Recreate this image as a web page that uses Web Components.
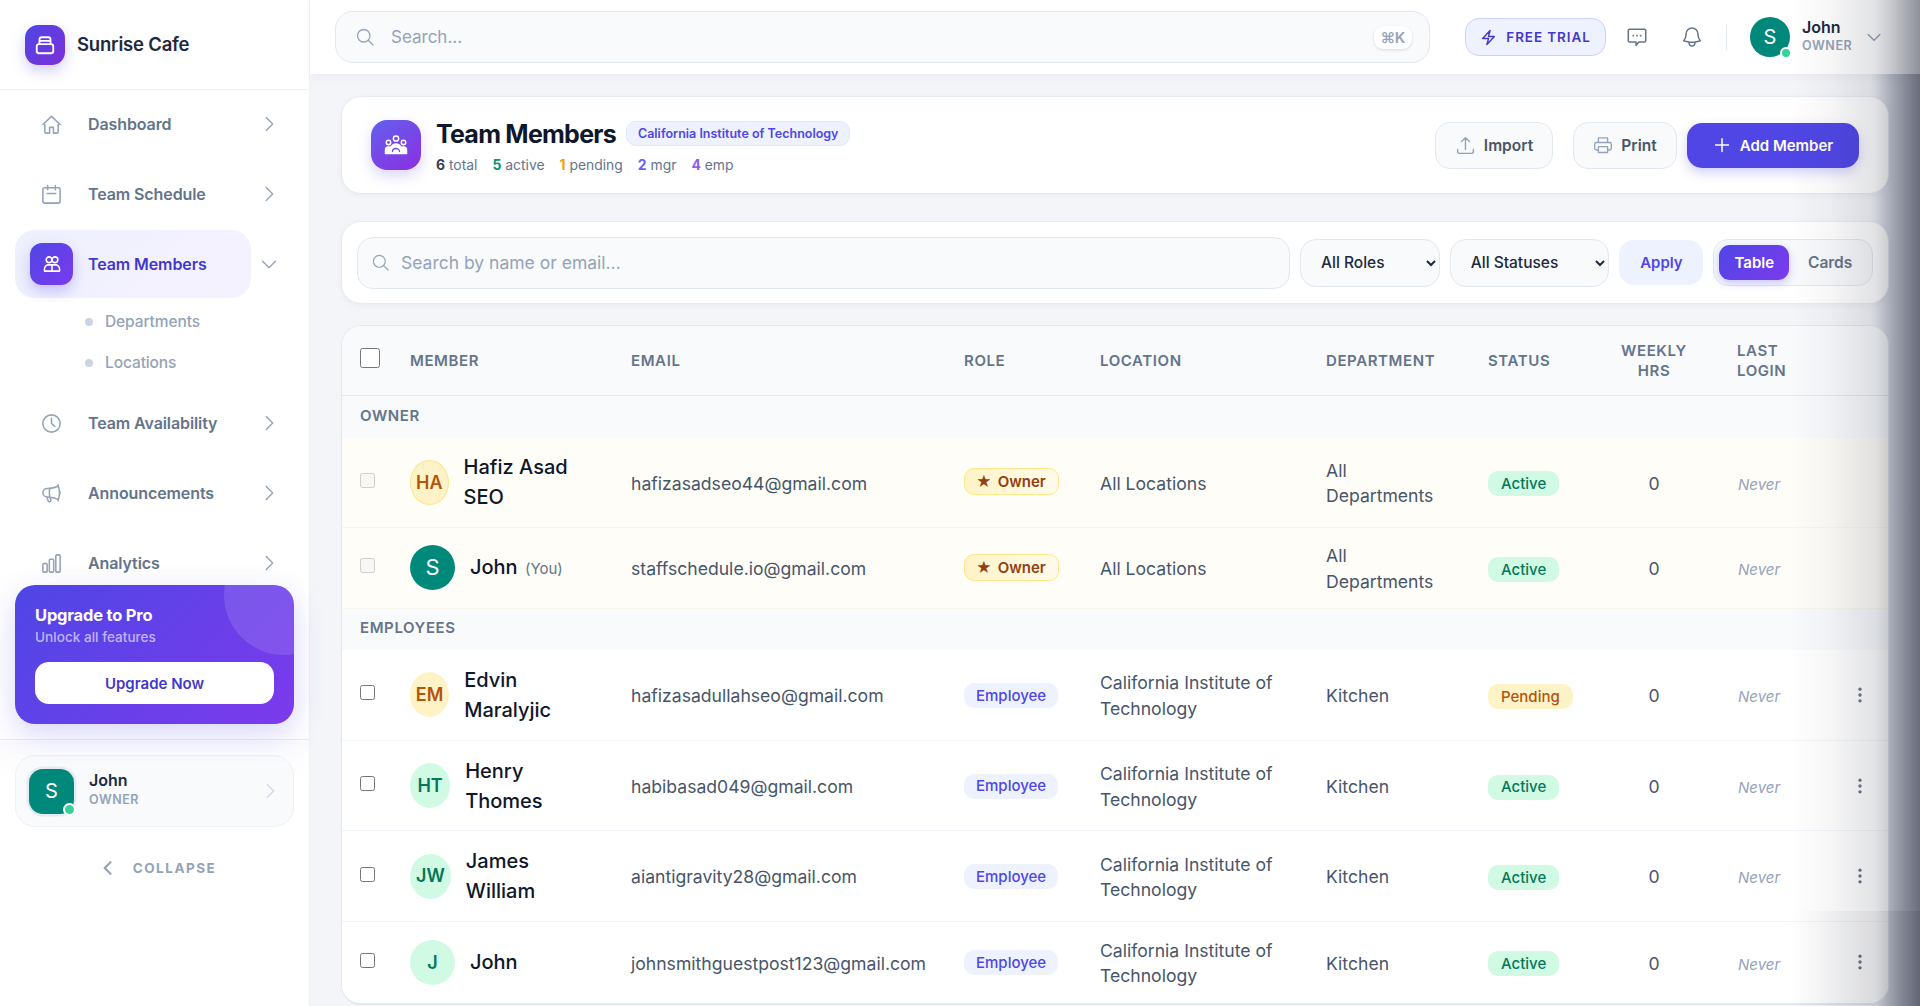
<!DOCTYPE html>
<html lang="en">
<head>
<meta charset="utf-8">
<title>Team Members - Sunrise Cafe</title>
<style>
  html, body { margin: 0; height: 100%; overflow: hidden; }
  body { font-family: Inter, "Noto Sans", sans-serif; color: #1e293b; background: #f3f5f9; }
</style>
</head>
<body>
<sc-app>
  <sc-sidebar slot="sidebar">
    <sc-nav-item icon="home">Dashboard</sc-nav-item>
    <sc-nav-item icon="calendar">Team Schedule</sc-nav-item>
    <sc-nav-item icon="users" active>Team Members</sc-nav-item>
    <sc-sub-item>Departments</sc-sub-item>
    <sc-sub-item>Locations</sc-sub-item>
    <sc-nav-item icon="clock" class="after-sub">Team Availability</sc-nav-item>
    <sc-nav-item icon="megaphone">Announcements</sc-nav-item>
    <sc-nav-item icon="chart">Analytics</sc-nav-item>
  </sc-sidebar>
  <sc-topbar slot="topbar"></sc-topbar>
  <sc-page-header></sc-page-header>
  <sc-filter-bar></sc-filter-bar>
  <sc-table>
    <sc-group-row>Owner</sc-group-row>
    <sc-member-row owner name="Hafiz Asad SEO" initials="HA" tone="amber" email="hafizasadseo44@gmail.com" role="Owner" location="All Locations" dept="All Departments" status="Active"></sc-member-row>
    <sc-member-row owner name="John" you initials="S" tone="teal" email="staffschedule.io@gmail.com" role="Owner" location="All Locations" dept="All Departments" status="Active"></sc-member-row>
    <sc-group-row>Employees</sc-group-row>
    <sc-member-row name="Edvin Maralyjic" initials="EM" tone="amber" email="hafizasadullahseo@gmail.com" role="Employee" location="California Institute of Technology" dept="Kitchen" status="Pending"></sc-member-row>
    <sc-member-row name="Henry Thomes" initials="HT" tone="green" email="habibasad049@gmail.com" role="Employee" location="California Institute of Technology" dept="Kitchen" status="Active"></sc-member-row>
    <sc-member-row name="James William" initials="JW" tone="green" email="aiantigravity28@gmail.com" role="Employee" location="California Institute of Technology" dept="Kitchen" status="Active"></sc-member-row>
    <sc-member-row name="John" initials="J" tone="green" email="johnsmithguestpost123@gmail.com" role="Employee" location="California Institute of Technology" dept="Kitchen" status="Active"></sc-member-row>
  </sc-table>
  <sc-edge-shadow slot="overlay"></sc-edge-shadow>
</sc-app>

<script>
const ICONS = {
  home: '<path d="M3 12l9-8.5 9 8.5M5 10v9.5a1.5 1.5 0 0 0 1.5 1.5H10v-6h4v6h3.5a1.5 1.5 0 0 0 1.5-1.5V10"/>',
  calendar: '<rect x="3" y="5" width="18" height="16" rx="2"/><path d="M8 2.5V7M16 2.5V7M7.5 11h9"/>',
  users: '<circle cx="8.5" cy="7" r="3.5"/><circle cx="15.5" cy="7" r="3.5"/><path d="M3 20.5v-2.5a5 5 0 0 1 5-5h8a5 5 0 0 1 5 5v2.5zM12 13.5v7"/>',
  clock: '<circle cx="12" cy="12" r="9"/><path d="M12 6.5V12l3.5 3"/>',
  megaphone: '<path d="M10.34 15.84c-.688-.06-1.386-.09-2.09-.09H7.5a4.5 4.5 0 110-9h.75c.704 0 1.402-.03 2.09-.09m0 9.18c.253.962.584 1.892.985 2.783.247.55.06 1.21-.463 1.511l-.657.38c-.551.318-1.26.117-1.527-.461a20.845 20.845 0 01-1.44-4.282m3.102.069a18.03 18.03 0 01-.59-4.59c0-1.586.205-3.124.59-4.59m0 9.18a23.848 23.848 0 018.835 2.535M10.34 6.66a23.847 23.847 0 008.835-2.535m0 0A23.74 23.74 0 0018.795 3m.38 1.125a23.91 23.91 0 011.014 5.395m-1.014 8.855c-.118.38-.245.754-.38 1.125m.38-1.125a23.91 23.91 0 001.014-5.395m0-3.46c.495.413.811 1.035.811 1.73 0 .695-.316 1.317-.811 1.73m0-3.46a24.347 24.347 0 010 3.46"/>',
  chart: '<path d="M3 13.125C3 12.504 3.504 12 4.125 12h2.25c.621 0 1.125.504 1.125 1.125v6.75C7.5 20.496 6.996 21 6.375 21h-2.25A1.125 1.125 0 013 19.875v-6.75zM9.75 8.625c0-.621.504-1.125 1.125-1.125h2.25c.621 0 1.125.504 1.125 1.125v11.25c0 .621-.504 1.125-1.125 1.125h-2.25a1.125 1.125 0 01-1.125-1.125V8.625zM16.5 4.125c0-.621.504-1.125 1.125-1.125h2.25C20.496 3 21 3.504 21 4.125v15.75c0 .621-.504 1.125-1.125 1.125h-2.25a1.125 1.125 0 01-1.125-1.125V4.125z"/>',
  right: '<path d="M9 5l7 7-7 7"/>',
  down: '<path d="M5 9l7 7 7-7"/>',
  left: '<path d="M15 5l-7 7 7 7"/>',
  store: '<rect x="3" y="11" width="18" height="10" rx="2.5"/><path d="M6 11V6a2.5 2.5 0 0 1 2.5-2.5h7A2.5 2.5 0 0 1 18 6v5M6 7.5h12"/>',
  team: '<circle cx="12" cy="5.500" r="2.600"/><circle cx="4.500" cy="9.500" r="2.200"/><circle cx="19.500" cy="9.500" r="2.200"/><path d="M1.500 20.500v-3.500a3 3 0 0 1 3-3h2.700a5.200 5 0 0 1 9.600 0h2.700a3 3 0 0 1 3 3v3.500z" fill="currentColor"/><path d="M8.500 18.500a3.500 3 0 0 1 7 0" stroke="#7b49e6" stroke-width="1.300"/>',
  search: '<circle cx="10.500" cy="10.500" r="7.500"/><path d="M16 16l5.500 5.500"/>',
  bolt: '<path d="M3.750 13.500l10.500-11.250L12 10.500h8.250L9.750 21.750 12 13.500H3.750z"/>',
  chat: '<path d="M4 3.500h16a1.500 1.500 0 0 1 1.500 1.500v11a1.500 1.500 0 0 1-1.500 1.500h-6l-3 3.500v-3.500H4A1.500 1.500 0 0 1 2.500 16V5A1.500 1.500 0 0 1 4 3.500z"/><path d="M8 10.500h.01M12 10.500h.01M16 10.500h.01" stroke-width="2"/>',
  bell: '<path d="M14.857 17.082a23.848 23.848 0 005.454-1.310A8.967 8.967 0 0118 9.750v-.700V9A6 6 0 006 9v.750a8.967 8.967 0 01-2.312 6.022c1.733.640 3.560 1.085 5.455 1.310m5.714 0a24.255 24.255 0 01-5.714 0m5.714 0a3 3 0 11-5.714 0"/>',
  upload: '<path d="M3 16.500v2.250A2.250 2.250 0 005.250 21h13.500A2.250 2.250 0 0021 18.750V16.500m-13.500-9L12 3m0 0l4.500 4.500M12 3v13.500"/>',
  print: '<path d="M6.500 9V3.500h11V9M6.500 18H4a2 2 0 0 1-2-2v-5a2 2 0 0 1 2-2h16a2 2 0 0 1 2 2v5a2 2 0 0 1-2 2h-2.500M6.500 14h11v7h-11z"/>',
  plus: '<path d="M12 3.500v17M3.500 12h17"/>',
  dots: '<circle cx="12" cy="5" r="2" fill="currentColor" stroke="none"/><circle cx="12" cy="12" r="2" fill="currentColor" stroke="none"/><circle cx="12" cy="19" r="2" fill="currentColor" stroke="none"/>'
};

class ScIcon extends HTMLElement {
  connectedCallback() {
    const size = this.getAttribute("size") || 20;
    const sw = this.getAttribute("stroke") || 1.6;
    this.attachShadow({ mode: "open" }).innerHTML = `
      <style>:host { display: inline-flex; flex: none; width: ${size}px; height: ${size}px; } svg { display: block; }</style>
      <svg width="${size}" height="${size}" viewBox="0 0 24 24" fill="none" stroke="currentColor" stroke-width="${sw}" stroke-linecap="round" stroke-linejoin="round">${ICONS[this.getAttribute("name")] || ""}</svg>`;
  }
}

class ScApp extends HTMLElement {
  constructor() {
    super();
    this.attachShadow({ mode: "open" }).innerHTML = `
      <style>
        :host { display: grid; grid-template-columns: 310px 1fr; height: 1006px; position: relative; overflow: hidden; }
        .main { display: flex; flex-direction: column; min-width: 0; background: linear-gradient(90deg, #f3f5f9 0, #f3f5f9 1560px, #d6d9e2 1580px, #b5b8c3 1610px); }
        .content { padding: 22px 31px 0; display: flex; flex-direction: column; }
      </style>
      <slot name="sidebar"></slot>
      <div class="main">
        <slot name="topbar"></slot>
        <div class="content"><slot></slot></div>
      </div>
      <slot name="overlay"></slot>`;
  }
}

class ScSidebar extends HTMLElement {
  constructor() {
    super();
    this.attachShadow({ mode: "open" }).innerHTML = `
      <style>
        :host { display: flex; flex-direction: column; background: #fff; border-right: 1px solid #eef1f6; box-sizing: border-box; width: 310px; height: 1006px; }
        .brand { height: 90px; box-sizing: border-box; border-bottom: 1px solid #eef1f6; display: flex; align-items: center; gap: 12px; padding: 0 0 0 25px; flex: none; }
        .logo { width: 40px; height: 40px; border-radius: 13px; background: linear-gradient(135deg, #4f46e5, #7c2fd6); color: #fff; display: flex; align-items: center; justify-content: center; box-shadow: 0 6px 14px rgba(79,70,229,.25); }
        .brand b { font-size: 18.500px; font-weight: 600; letter-spacing: -.2px; color: #1e293b; margin-top: -1px; }
        nav { height: 495px; overflow: hidden; flex: none; }
        .promo-wrap { flex: none; position: relative; z-index: 1; margin: 0 15px; border-radius: 20px; box-shadow: 0 10px 30px rgba(79,70,229,.22); }
        .promo { position: relative; height: 139px; box-sizing: border-box; padding: 19px 20px 20px; border-radius: 20px; overflow: hidden; color: #fff; background: linear-gradient(135deg, #4f46e5, #7c3aed); }
        .promo::after { content: ""; position: absolute; width: 120px; height: 120px; border-radius: 50%; left: 209px; top: -50px; background: rgba(255,255,255,.12); }
        .promo h4 { margin: 0; font-size: 16.500px; line-height: 22px; font-weight: 700; letter-spacing: -.2px; }
        .promo p { margin: 1px 0 0; font-size: 13.600px; line-height: 20px; font-weight: 500; color: rgba(255,255,255,.62); }
        .promo button { display: block; width: 100%; height: 42px; margin-top: 15px; border: 0; border-radius: 14px; background: #fff; color: #4338ca; font: 600 15px Inter, sans-serif; }
        .foot { flex: 1; margin-top: 15px; border-top: 1px solid #e9ebf4; padding: 15px 15px 0; background: linear-gradient(#fbfbfe, #fff 40px); }
        .user { display: flex; align-items: center; height: 72px; box-sizing: border-box; padding: 0 13px; border: 1px solid #edf0f6; border-radius: 20px; background: #f8fafc; }
        .ava { position: relative; width: 45px; height: 45px; flex: none; border-radius: 14px; background: #00897b; color: #fff; font-size: 20px; display: flex; align-items: center; justify-content: center; box-shadow: 0 0 0 2.500px #e6eaf1; }
        .dot { position: absolute; right: -2px; bottom: -2px; width: 9px; height: 9px; border-radius: 50%; background: #34d399; border: 2px solid #fff; }
        .who { flex: 1; margin: -4px 0 0 15px; }
        .who b { display: block; font-size: 16px; line-height: 20px; font-weight: 600; color: #1e293b; }
        .who span { display: block; margin-top: 1px; font-size: 12.500px; line-height: 17px; font-weight: 600; letter-spacing: .5px; color: #94a3b8; }
        .user sc-icon { color: #cbd5e1; margin-right: -1px; }
        .collapse { display: flex; align-items: center; justify-content: center; gap: 15px; margin-top: 31px; padding-left: 5px; font-size: 13.500px; font-weight: 700; letter-spacing: 1.500px; color: #94a3b8; }
      </style>
      <div class="brand"><div class="logo"><sc-icon name="store" size="22" stroke="2"></sc-icon></div><b>Sunrise Cafe</b></div>
      <nav><slot></slot></nav>
      <div class="promo-wrap"><div class="promo">
        <h4>Upgrade to Pro</h4>
        <p>Unlock all features</p>
        <button type="button">Upgrade Now</button>
      </div></div>
      <div class="foot">
        <div class="user">
          <div class="ava">S<span class="dot"></span></div>
          <div class="who"><b>John</b><span>OWNER</span></div>
          <sc-icon name="right" size="22" stroke="1.300"></sc-icon>
        </div>
        <div class="collapse"><sc-icon name="left" size="20" stroke="2.600"></sc-icon>COLLAPSE</div>
      </div>`;
  }
}

class ScNavItem extends HTMLElement {
  connectedCallback() {
    const active = this.hasAttribute("active");
    this.attachShadow({ mode: "open" }).innerHTML = `
      <style>
        :host { display: flex; align-items: center; height: 68px; margin: 0 0 2px; padding-left: 15px; font-size: 16px; font-weight: 600; letter-spacing: -.1px; }
        :host([active]) { margin-bottom: 3px; }
        :host(.after-sub) { margin-top: 6px; }
        .box { width: 236px; height: 68px; box-sizing: border-box; display: flex; align-items: center; border-radius: 20px; color: #64748b; }
        .ic { width: 73px; flex: none; display: flex; justify-content: flex-start; padding-left: 25px; box-sizing: border-box; color: #94a3b8; }
        :host([active]) .box { background: linear-gradient(135deg, #eef0fd, #f5f2fe); color: #4338ca; }
        :host([active]) .ic { width: 73px; padding-left: 15px; }
        .tile { width: 43px; height: 42px; border-radius: 12px; display: flex; align-items: center; justify-content: center; color: #fff; background: linear-gradient(135deg, #4f46e5, #7c3aed); box-shadow: 0 6px 14px rgba(79,70,229,.28); }
        .chev { margin-left: 7px; color: #94a3b8; }
      </style>
      <div class="box">
        <div class="ic">${active
          ? `<div class="tile"><sc-icon name="users" size="20" stroke="1.900"></sc-icon></div>`
          : `<sc-icon name="${this.getAttribute("icon")}" size="23" stroke="1.600"></sc-icon>`}</div>
        <slot></slot>
      </div>
      <sc-icon class="chev" name="${active ? "down" : "right"}" size="22" stroke="1.500"></sc-icon>`;
  }
}

class ScSubItem extends HTMLElement {
  constructor() {
    super();
    this.attachShadow({ mode: "open" }).innerHTML = `
      <style>
        :host { display: flex; align-items: center; height: 41px; padding-left: 85px; gap: 12px; font-size: 15.500px; font-weight: 500; letter-spacing: -.1px; color: #94a3b8; }
        i { width: 8px; height: 8px; border-radius: 50%; background: #cbd5e1; }
      </style><i></i><slot></slot>`;
  }
}

class ScTopbar extends HTMLElement {
  constructor() {
    super();
    this.attachShadow({ mode: "open" }).innerHTML = `
      <style>
        :host { display: flex; align-items: center; height: 74px; box-sizing: border-box; padding: 0 36px 0 25px; background: #fff; box-shadow: 0 3px 10px rgba(15,23,42,.04); position: relative; }
        .search { flex: 1; height: 52px; box-sizing: border-box; margin-right: 35px; display: flex; align-items: center; gap: 16px; padding: 0 17px 0 19px; background: #f8fafc; border: 1px solid #e2e8f0; border-radius: 18px; color: #94a3b8; }
        .search span { flex: 1; font-size: 17px; }
        kbd { font: 600 15px Inter, "DejaVu Sans", sans-serif; letter-spacing: -.4px; background: #fff; color: #94a3b8; border-radius: 9px; padding: 2px 7px; box-shadow: 0 1px 3px rgba(15,23,42,.14); }
        .trial { display: flex; align-items: center; justify-content: center; gap: 9px; width: 141px; height: 38px; box-sizing: border-box; background: #eef2ff; border: 1px solid #c7d2fe; border-radius: 14px; color: #4338ca; font-size: 13.500px; font-weight: 600; letter-spacing: .9px; }
        .iconbtn { width: 40px; height: 40px; display: flex; align-items: center; justify-content: center; color: #64748b; }
        .chat { margin-left: 11px; }
        .bell { margin-left: 15px; }
        .sep { width: 1px; height: 26px; background: #e2e8f0; margin: 0 23px 0 14px; }
        .ava { position: relative; width: 40px; height: 40px; border-radius: 50%; background: #00897b; color: #fff; font-size: 20px; display: flex; align-items: center; justify-content: center; flex: none; }
        .dot { position: absolute; right: -2px; bottom: -2px; width: 8px; height: 8px; border-radius: 50%; background: #34d399; border: 2px solid #fff; }
        .who { width: 60px; margin: -2px 0 0 12px; }
        .who b { display: block; font-size: 16px; line-height: 20px; font-weight: 600; color: #1e293b; }
        .who span { display: block; font-size: 12.500px; line-height: 18px; font-weight: 600; letter-spacing: .6px; color: #94a3b8; }
        .chev { color: #94a3b8; margin-left: 2px; }
      </style>
      <div class="search"><sc-icon name="search" size="20" stroke="1.600"></sc-icon><span>Search...</span><kbd>⌘K</kbd></div>
      <div class="trial"><sc-icon name="bolt" size="17" stroke="2"></sc-icon>FREE TRIAL</div>
      <div class="iconbtn chat"><sc-icon name="chat" size="22" stroke="1.700"></sc-icon></div>
      <div class="iconbtn bell"><sc-icon name="bell" size="24" stroke="1.500"></sc-icon></div>
      <div class="sep"></div>
      <div class="ava">S<span class="dot"></span></div>
      <div class="who"><b>John</b><span>OWNER</span></div>
      <sc-icon class="chev" name="down" size="20" stroke="1.800"></sc-icon>`;
  }
}

class ScPageHeader extends HTMLElement {
  constructor() {
    super();
    this.attachShadow({ mode: "open" }).innerHTML = `
      <style>
        :host { display: flex; align-items: center; height: 98px; box-sizing: border-box; padding: 0 29px; background: #fff; border: 1px solid #e6eaf1; border-radius: 20px; box-shadow: 0 2px 6px rgba(15,23,42,.04); }
        .tile { width: 50px; height: 50px; flex: none; border-radius: 16px; display: flex; align-items: center; justify-content: center; color: #fff; background: linear-gradient(145deg, #6360ee, #8b2fe0); box-shadow: 0 6px 14px rgba(99,70,229,.22); }
        .text { margin-left: 15px; flex: 1; }
        .title { display: flex; align-items: center; gap: 10px; margin-top: 1px; }
        h1 { margin: 0; font-size: 25px; line-height: 36px; font-weight: 700; letter-spacing: -.75px; color: #0f172a; }
        .badge { height: 25px; box-sizing: border-box; display: flex; align-items: center; padding: 0 11px; margin-top: -2px; background: #eef2ff; border: 1px solid #e0e7ff; border-radius: 10px; color: #4f46e5; font-size: 12.500px; font-weight: 600; }
        .stats { display: flex; gap: 15px; margin-top: 3px; font-size: 13.900px; line-height: 20px; color: #64748b; }
        .stats b { font-weight: 700; }
        button { font: 600 15px Inter, sans-serif; display: flex; align-items: center; justify-content: center; gap: 8px; box-sizing: border-box; cursor: pointer; }
        .ghost { height: 47px; background: #f8fafc; border: 1px solid #e2e8f0; border-radius: 15px; color: #475569; font-size: 15.500px; }
        .ghost sc-icon { color: #94a3b8; }
        .import { width: 118px; margin-right: 20px; }
        .print { width: 104px; margin-right: 10px; }
        .add { width: 172px; height: 45px; border: 0; border-radius: 15px; background: #4f46e5; color: #fff; box-shadow: 0 5px 12px rgba(79,70,229,.25); gap: 9px; }
      </style>
      <div class="tile"><sc-icon name="team" size="24" stroke="1.500"></sc-icon></div>
      <div class="text">
        <div class="title"><h1>Team Members</h1><span class="badge">California Institute of Technology</span></div>
        <div class="stats">
          <span><b style="color:#334155">6</b> total</span>
          <span><b style="color:#059669">5</b> active</span>
          <span><b style="color:#f59e0b">1</b> pending</span>
          <span><b style="color:#6366f1">2</b> mgr</span>
          <span><b style="color:#8b5cf6">4</b> emp</span>
        </div>
      </div>
      <button class="ghost import" type="button"><sc-icon name="upload" size="21"></sc-icon>Import</button>
      <button class="ghost print" type="button"><sc-icon name="print" size="20"></sc-icon>Print</button>
      <button class="add" type="button"><sc-icon name="plus" size="18" stroke="2"></sc-icon>Add Member</button>`;
  }
}

class ScFilterBar extends HTMLElement {
  constructor() {
    super();
    this.attachShadow({ mode: "open" }).innerHTML = `
      <style>
        :host { display: flex; align-items: center; height: 83px; margin-top: 27px; box-sizing: border-box; padding: 0 15px; background: #fff; border: 1px solid #e6eaf1; border-radius: 20px; box-shadow: 0 2px 6px rgba(15,23,42,.04); }
        .search { width: 935px; height: 52px; margin-right: 10px; box-sizing: border-box; display: flex; align-items: center; gap: 11px; padding-left: 13px; background: #f8fafc; border: 1px solid #e2e8f0; border-radius: 16px; color: #94a3b8; font-size: 17.500px; }
        select { height: 48px; box-sizing: border-box; padding: 0 5px 0 16px; background-color: #f8fafc; border: 1px solid #e2e8f0; border-radius: 16px; color: #1e293b; font: 500 15.500px Inter, sans-serif; }
        .roles { width: 140px; margin-right: 10px; }
        .statuses { width: 160px; margin-right: 10px; }
        .apply { width: 84px; height: 45px; border: 0; border-radius: 15px; background: #eef2ff; color: #4f46e5; font: 600 15px Inter, sans-serif; margin-right: 10px; }
        .toggle { width: 160px; height: 47px; box-sizing: border-box; display: flex; align-items: center; padding: 0 5px; background: #f8fafc; border: 1px solid #e2e8f0; border-radius: 15px; font-size: 15px; font-weight: 600; }
        .on { width: 70px; height: 35px; display: flex; align-items: center; justify-content: center; border-radius: 11px; color: #fff; background: linear-gradient(135deg, #4f46e5, #7c3aed); box-shadow: 0 3px 8px rgba(79,70,229,.3); }
        .off { flex: 1; text-align: center; color: #64748b; padding-left: 4px; font-size: 15.500px; }
      </style>
      <div class="search"><sc-icon name="search" size="19" stroke="1.500"></sc-icon><span>Search by name or email...</span></div>
      <select class="roles"><option>All Roles</option><option>Owner</option><option>Employee</option></select>
      <select class="statuses"><option>All Statuses</option><option>Active</option><option>Pending</option></select>
      <button class="apply" type="button">Apply</button>
      <div class="toggle"><span class="on">Table</span><span class="off">Cards</span></div>`;
  }
}

const COLS = "48px 221px 333px 136px 226px 162px 123px 126px 93px 81px";

class ScTable extends HTMLElement {
  constructor() {
    super();
    this.attachShadow({ mode: "open" }).innerHTML = `
      <style>
        :host { display: block; margin-top: 21px; height: 680px; box-sizing: border-box; background: #fff; border: 1px solid #e2e8f0; border-width: 1px 1px 2px; border-radius: 20px; overflow: hidden; }
        .head { display: grid; grid-template-columns: ${COLS}; align-items: center; height: 70px; box-sizing: border-box; background: #f8fafc; border-bottom: 1px solid #e2e8f0; font-size: 15px; line-height: 20px; font-weight: 600; letter-spacing: .6px; color: #64748b; text-transform: uppercase; }
        .head > div { padding: 0 20px; }
        .head .ck { padding: 0 0 0 18px; height: 20px; margin-top: -5px; }
        .head .c { text-align: center; }
        input { appearance: auto; width: 20px; height: 20px; margin: 0; display: block; }
      </style>
      <div class="head">
        <div class="ck"><input type="checkbox" aria-label="Select all"></div>
        <div>Member</div><div>Email</div><div>Role</div><div>Location</div><div>Department</div><div>Status</div>
        <div class="c">Weekly Hrs</div><div>Last Login</div><div></div>
      </div>
      <slot></slot>`;
  }
}

class ScGroupRow extends HTMLElement {
  constructor() {
    super();
    this.attachShadow({ mode: "open" }).innerHTML = `
      <style>
        :host { display: flex; align-items: center; height: 41.500px; box-sizing: border-box; padding: 0 0 3px 18px; background: #f8fafc; font-size: 15px; font-weight: 600; letter-spacing: .6px; color: #64748b; text-transform: uppercase; }
      </style><slot></slot>`;
  }
}

const TONES = {
  amber: "background:#fef3c7;color:#b45309;",
  green: "background:#d1fae5;color:#047857;",
  teal: "background:#00897b;color:#fff;font-weight:400;font-size:22px;"
};

class ScMemberRow extends HTMLElement {
  connectedCallback() {
    const a = (n) => this.getAttribute(n) || "";
    const owner = this.hasAttribute("owner");
    const role = owner ? `<span class="owner"><i>★</i>Owner</span>` : `<span class="emp">${a("role")}</span>`;
    const status = a("status");
    this.attachShadow({ mode: "open" }).innerHTML = `
      <style>
        :host { display: grid; grid-template-columns: ${COLS}; align-items: center; box-sizing: border-box; background: #fff; border-bottom: 1px solid #f1f5f9; font-size: 17.600px; line-height: 25.500px; color: #475569; min-height: 80.600px; }
        :host([owner]) { background: #fffdf8; border-bottom-color: #f8f6ee; }
        :host(:last-child) { border-bottom: 0; }
        .cell { padding: 0 20px; min-width: 0; }
        .t { padding-top: 2px; }
        .ck { padding: 0 0 0 18px; margin-top: -4px; }
        input { width: 15px; height: 15px; margin: 0; display: block; }
        .member { display: flex; align-items: center; gap: 15px; padding: 14.800px 20px; }
        .ava { width: 45px; height: 45px; border-radius: 50%; display: flex; align-items: center; justify-content: center; font-size: 18px; font-weight: 600; box-sizing: border-box; ${TONES[a("tone")]} }
        :host([owner]) .ava { ${a("tone") === "amber" ? "border:1px solid #fde68a;" : ""} }
        .name { font-size: 20px; line-height: 30px; font-weight: 500; color: #0f172a; }
        .name small { font-size: 15px; font-weight: 400; color: #64748b; margin-left: 2px; }
        .owner { display: inline-flex; align-items: center; height: 27px; box-sizing: border-box; padding: 0 12px 0 11px; margin-top: -3px; vertical-align: middle; border: 1px solid #fde68a; border-radius: 10px; background: linear-gradient(90deg, #fef3c7, #fffbeb); color: #92400e; font-size: 15px; font-weight: 600; white-space: nowrap; }
        .owner i { font-style: normal; margin-right: 6px; }
        .emp { display: inline-flex; align-items: center; height: 25px; padding: 0 12px; border-radius: 10px; background: #eef2ff; color: #4f46e5; font-size: 15px; font-weight: 500; }
        .st { display: inline-flex; align-items: center; height: 25px; padding: 0 13px; margin-top: 3px; border-radius: 10px; font-size: 15px; font-weight: 500; }
        .Active { background: #d1fae5; color: #047857; }
        .Pending { background: #fef3c7; color: #b45309; }
        .hrs { text-align: center; }
        .never { font-size: 15px; font-style: italic; color: #94a3b8; padding: 4px 0 0 21px; }
        .act { display: flex; justify-content: flex-end; padding-right: 21px; color: #64748b; }
      </style>
      <div class="cell ck"><input type="checkbox" ${owner ? "disabled" : ""} aria-label="Select ${a("name")}"></div>
      <div class="member">
        <div class="ava">${a("initials")}</div>
        <div class="name">${a("name")}${this.hasAttribute("you") ? ` <small>(You)</small>` : ""}</div>
      </div>
      <div class="cell t">${a("email")}</div>
      <div class="cell">${role}</div>
      <div class="cell t">${a("location")}</div>
      <div class="cell t">${a("dept")}</div>
      <div class="cell"><span class="st ${status}">${status}</span></div>
      <div class="cell t hrs">0</div>
      <div class="cell never">Never</div>
      <div class="act">${owner ? "" : `<sc-icon name="dots" size="20"></sc-icon>`}</div>`;
  }
}

// soft shadow of the off-canvas panel on the right edge, lies over everything
class ScEdgeShadow extends HTMLElement {
  constructor() {
    super();
    this.attachShadow({ mode: "open" }).innerHTML = `
      <style>
        :host { position: absolute; inset: 0 0 0 auto; width: 130px; pointer-events: none; z-index: 5; display: flex; flex-direction: column; }
        div { background: linear-gradient(90deg, rgba(30,35,55,0) 0, rgba(30,35,55,.04) 40px, rgba(30,35,55,.13) 85px, rgba(30,35,55,.24) 100px, rgba(30,35,55,.5) 130px); }
        .a { height: 911px; }
        .b { flex: 1; background: linear-gradient(90deg, rgba(30,35,55,0) 0, rgba(30,35,55,.05) 30px, rgba(30,35,55,.17) 85px, rgba(30,35,55,.3) 100px, rgba(30,35,55,.56) 130px); }
      </style>
      <div class="a"></div><div class="b"></div>`;
  }
}

customElements.define("sc-icon", ScIcon);
customElements.define("sc-app", ScApp);
customElements.define("sc-sidebar", ScSidebar);
customElements.define("sc-nav-item", ScNavItem);
customElements.define("sc-sub-item", ScSubItem);
customElements.define("sc-topbar", ScTopbar);
customElements.define("sc-page-header", ScPageHeader);
customElements.define("sc-filter-bar", ScFilterBar);
customElements.define("sc-table", ScTable);
customElements.define("sc-group-row", ScGroupRow);
customElements.define("sc-member-row", ScMemberRow);
customElements.define("sc-edge-shadow", ScEdgeShadow);
</script>
</body>
</html>
